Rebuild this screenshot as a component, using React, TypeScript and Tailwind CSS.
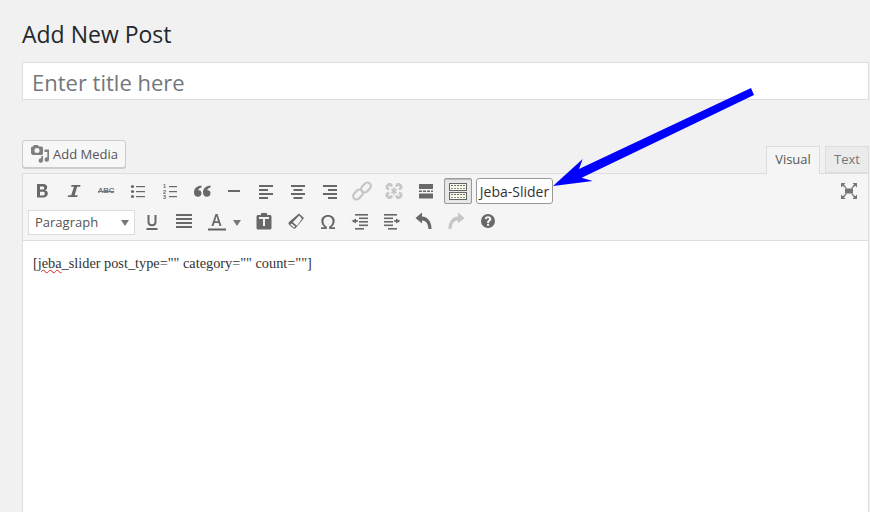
import React from "react";

const C = "#686868";
const D = "#c6c6c6";

function Ico({ children, w = 20, h = 20, className = "" }: { children: React.ReactNode; w?: number; h?: number; className?: string }) {
  return (
    <svg width={w} height={h} viewBox={`0 0 ${w} ${h}`} className={className} fill={C}>
      {children}
    </svg>
  );
}

function Cell({ children, w = "w-[32px]", up = false }: { children: React.ReactNode; w?: string; up?: boolean }) {
  return <div className={`${w} h-full flex items-center justify-center shrink-0 ${up ? "pb-[3px]" : ""}`}>{children}</div>;
}

const Lines = ({ rows, h = 2 }: { rows: [number, number, number][]; h?: number }) => (
  <>
    {rows.map(([x, y, w], i) => (
      <rect key={i} x={x} y={y} width={w} height={h} fill={C} />
    ))}
  </>
);

const Bold = () => (
  <Ico>
    <path fillRule="evenodd" d="M5 3h6.200c2.600 0 4 1.300 4 3.300 0 1.500-.8 2.600-2.200 3 1.700.3 2.800 1.500 2.800 3.300 0 2.400-1.700 3.900-4.600 3.900H5zM8 5.400v3.200h2.600c1 0 1.600-.6 1.600-1.600s-.6-1.600-1.600-1.600zm0 5.400v3.700h3c1.100 0 1.800-.7 1.800-1.900s-.7-1.800-1.800-1.800z" />
  </Ico>
);
const Italic = () => (
  <Ico>
    <path d="M7.500 4h9l-.4 1.800h-3L10.700 14.200h3l-.4 1.800h-9.500l.4-1.800h3L10 5.800H7.100z" />
  </Ico>
);
const Strike = () => (
  <span className="relative font-['Liberation_Sans',sans-serif] font-bold text-[8px] leading-none text-[#777777] tracking-[-0.2px]">
    ABC
    <span className="absolute left-0 right-0 top-[4px] h-[1px] bg-[#777777]" />
  </span>
);
const Ul = () => (
  <Ico>
    <circle cx="4.500" cy="5.500" r="1.600" />
    <circle cx="4.500" cy="10.500" r="1.600" />
    <circle cx="4.500" cy="15.500" r="1.600" />
    <Lines h={1.200} rows={[[8, 5, 9], [8, 10, 9], [8, 15, 9]]} />
  </Ico>
);
const Ol = () => (
  <Ico>
    <text x="3" y="7" fontSize="5.500" fontFamily="Liberation Sans, sans-serif" fontWeight="700" fill={C}>1</text>
    <text x="3" y="12.500" fontSize="5.500" fontFamily="Liberation Sans, sans-serif" fontWeight="700" fill={C}>2</text>
    <text x="3" y="18" fontSize="5.500" fontFamily="Liberation Sans, sans-serif" fontWeight="700" fill={C}>3</text>
    <Lines h={1.200} rows={[[9, 5, 8], [9, 10, 8], [9, 15, 8]]} />
  </Ico>
);
const Quote = () => (
  <Ico>
    <path d="M9.500 4.500v2C7.500 7 6.400 8 6.200 9.300c2-.3 3.300 1.100 3.300 2.900 0 2-1.400 3.500-3.500 3.500-2.400 0-4-1.700-4-4.300 0-3.900 2.800-6.500 7.500-6.900z" />
    <path d="M18.500 4.500v2c-2 .5-3.100 1.500-3.300 2.800 2-.3 3.300 1.100 3.300 2.900 0 2-1.400 3.500-3.500 3.500-2.400 0-4-1.700-4-4.300 0-3.900 2.800-6.500 7.500-6.900z" />
  </Ico>
);
const Hr = () => (
  <Ico>
    <rect x="4" y="9" width="12" height="2" />
  </Ico>
);
const AlignL = () => (
  <Ico>
    <Lines rows={[[3, 4, 14], [3, 8, 9], [3, 12, 14], [3, 16, 9]]} />
  </Ico>
);
const AlignC = () => (
  <Ico>
    <Lines rows={[[3, 4, 14], [5.500, 8, 9], [3, 12, 14], [5.500, 16, 9]]} />
  </Ico>
);
const AlignR = () => (
  <Ico>
    <Lines rows={[[3, 4, 14], [8, 8, 9], [3, 12, 14], [8, 16, 9]]} />
  </Ico>
);
const LinkI = () => (
  <Ico>
    <g fill="none" stroke={D} strokeWidth="2.200">
      <rect x="10.500" y="1" width="7" height="11" rx="3.500" transform="rotate(42 14 6.500)" />
      <rect x="2.500" y="8" width="7" height="11" rx="3.500" transform="rotate(42 6 13.500)" />
    </g>
  </Ico>
);
const Unlink = () => (
  <Ico>
    <g fill="none" stroke={D} strokeWidth="2.800">
      <path d="M8 5.500 6.500 3.500a2.800 2.800 0 0 0-3.500 3.500L5 8.500" />
      <path d="M12 5.500l1.500-2a2.800 2.800 0 0 1 3.500 3.500L15 8.500" />
      <path d="M8 14.500l-1.500 2a2.800 2.800 0 0 1-3.500-3.500L5 11.500" />
      <path d="M12 14.500l1.500 2a2.800 2.800 0 0 0 3.500-3.500L15 11.500" />
      <path d="M7.500 8l5 4M12.500 8l-5 4" strokeWidth="2" />
      <path d="M10 6v8" strokeWidth="1.400" />
    </g>
  </Ico>
);
const More = () => (
  <Ico>
    <rect x="3" y="3" width="14" height="5" />
    <rect x="3" y="9.500" width="3" height="1.500" />
    <rect x="7" y="9.500" width="3" height="1.500" />
    <rect x="11" y="9.500" width="3" height="1.500" />
    <rect x="15" y="9.500" width="2" height="1.500" />
    <rect x="3" y="12.500" width="14" height="5" />
  </Ico>
);
const GridKb = () => (
  <svg width="20" height="20" viewBox="0 0 20 20" shapeRendering="crispEdges">
    <rect x="1.500" y="2.500" width="17" height="7" fill="#f6f6ec" stroke="#666666" />
    <rect x="1.500" y="11.500" width="17" height="7" fill="#f6f6ec" stroke="#666666" />
    <path d="M3 4.500h14M3 13.500h14" stroke="#6e6e5e" strokeWidth="1" strokeDasharray="2 1" />
    <path d="M3 7.500h14M3 16.500h14" stroke="#7f9f7f" strokeWidth="1" strokeDasharray="2 1" />
  </svg>
);
const Under = () => (
  <Ico>
    <path d="M5.500 4h2v6.800c0 1.700.9 2.500 2.500 2.500s2.500-.8 2.500-2.500V4h2v7c0 2.800-1.700 4.300-4.500 4.300S5.500 13.800 5.500 11z" />
    <rect x="4.500" y="17" width="11" height="2" />
  </Ico>
);
const Burger = () => (
  <Ico>
    <Lines rows={[[2, 3, 16], [2, 7, 16], [2, 11, 16], [2, 15, 16]]} />
  </Ico>
);
const TextColor = () => (
  <Ico>
    <path fillRule="evenodd" d="M9.500 3h2l4 12h-1.900l-1-3H8.400l-1 3H5.500zM10.500 5.300 9 10.300h3z" />
    <rect x="2" y="17.500" width="18" height="2" fill="#606060" />
  </Ico>
);
const Paste = () => (
  <Ico>
    <path fillRule="evenodd" d="M7 2h6v2h3c.8 0 1.500.7 1.500 1.500V17c0 .8-.7 1.500-1.500 1.500H4c-.8 0-1.500-.7-1.500-1.500V5.500C2.500 4.700 3.200 4 4 4h3zM5 6v2h4v7h2V8h4V6z" />
  </Ico>
);
const Eraser = () => (
  <Ico>
    <path fillRule="evenodd" d="M13 2.500 18 7 9.800 17c-.8.900-2 .9-2.800.2l-3.800-3.400c-.8-.7-.9-1.900-.2-2.800zM13.200 4.600 6.800 11.300l4.200 3.500 5-7zM5.500 12.500 4.400 13.600 8 16.700l1.200-1.200z" />
  </Ico>
);
const Omega = () => (
  <Ico>
    <path d="M3 18v-1.800h3.800C4.600 14.700 3.300 12.500 3.300 10 3.300 6.400 6 4 10 4s6.700 2.400 6.700 6c0 2.500-1.300 4.700-3.500 6.200H17V18h-5.800v-2.400c2-1 3.300-3 3.300-5.400 0-2.800-1.800-4.400-4.500-4.400S5.500 7.400 5.500 10.200c0 2.400 1.300 4.400 3.300 5.400V18z" />
  </Ico>
);
const Outdent = () => (
  <Ico>
    <Lines h={1.600} rows={[[5, 3, 13], [9, 6.500, 9], [9, 10, 9], [9, 13.500, 9], [5, 17, 9]]} />
    <path d="M6 7.500v5L1.500 10z" />
    <rect x="5" y="9.200" width="3" height="1.600" />
  </Ico>
);
const Indent = () => (
  <Ico>
    <Lines h={1.600} rows={[[2, 3, 13], [2, 6.500, 9], [2, 10, 9], [2, 13.500, 9], [6, 17, 9]]} />
    <path d="M14 7.500v5l4.500-2.500z" />
    <rect x="12" y="9.200" width="3" height="1.600" />
  </Ico>
);
const Undo = () => (
  <Ico>
    <path d="M8 1.500 1.500 7 8 12.500V9.500c3.800.1 6 2.700 6.500 8.500h3C17.500 10.500 14 6 8 5.500z" />
  </Ico>
);
const Redo = () => (
  <Ico>
    <path fill={D} d="M12 1.500 18.500 7 12 12.500V9.500c-3.800.1-6 2.700-6.500 8.500h-3C2.500 10.500 6 6 12 5.500z" />
  </Ico>
);
const Help = () => (
  <Ico>
    <path fillRule="evenodd" d="M10 3a7 7 0 1 1 0 14 7 7 0 0 1 0-14zM10 5.200c-2 0-3.100 1-3.300 2.800l2 .3c.1-.8.500-1.200 1.200-1.200.7 0 1.100.4 1.100 1 0 .5-.3.8-.9 1.200-.8.600-1 1.200-1 2.100v.5h2v-.3c0-.5.200-.8.800-1.200 1-.7 1.400-1.300 1.400-2.400 0-1.800-1.100-2.800-3.300-2.800zM9 12.800v2h2.100v-2z" />
  </Ico>
);
const Full = () => (
  <svg width="20" height="20" viewBox="0 0 20 20" fill="#757575">
    <rect x="6" y="7.500" width="8" height="5" />
    <path d="M2 2h4.500L5 3.500 8 7.500H6.800L3.800 4.800 2 6.500zM18 2h-4.500L15 3.500 12 7.500h1.200l3-2.700L18 6.500zM2 18h4.500L5 16.500l3-4H6.800l-3 2.700L2 13.500zM18 18h-4.500l1.500-1.500-3-4h1.200l3 2.700 1.800-1.700z" />
  </svg>
);
const MediaI = () => (
  <svg width="20" height="20" viewBox="0 0 20 20" fill="#808080">
    <path fillRule="evenodd" d="M4 1h4l1 1.500h2.500c.8 0 1.500.7 1.500 1.500v5.500c0 .8-.7 1.500-1.500 1.500h-9C1.700 10.500 1 9.800 1 9V4c0-.8.7-1.500 1.500-1.500H3zM7 4a2.500 2.500 0 1 0 0 5 2.500 2.500 0 0 0 0-5z" />
    <path d="M14.500 5.500H19v10a2.200 2.200 0 1 1-1.700-2.100V8h-2.800zM13 12v4.500a2.200 2.200 0 1 1-1.700-2.100V12z" />
  </svg>
);

export default function App() {
  return (
    <div className="relative w-[870px] h-[512px] overflow-hidden bg-[#f1f1f1] font-['Open_Sans',sans-serif] pl-[22px] pr-[1px] flex flex-col">
      <h1 className="mt-[19px] h-[31px] leading-[31px] text-[23px] text-[#23282d] font-normal">Add New Post</h1>
      <input
        readOnly
        placeholder="Enter title here"
        className="mt-[12px] h-[38px] w-full shrink-0 bg-white border border-[#dddddd] pl-[9px] pt-[2px] text-[22px] outline-none placeholder:text-[#72777c]"
      />
      <div className="mt-[40px] h-[34px] shrink-0 flex items-start justify-between">
        <button className="h-[28px] w-[104px] flex items-center gap-[3px] pl-[7px] rounded-[3px] border border-[#cccccc] bg-[#f7f7f7] shadow-[0_1px_0_#cccccc] text-[13px] text-[#555555]">
          <MediaI />
          <span className="pt-[2px]">Add Media</span>
        </button>
        <div className="mt-[6px] flex gap-[5px] h-[28px]">
          <div className="w-[54px] h-[28px] bg-[#f5f5f5] border border-[#dddddd] border-b-0 flex items-center justify-center pb-[2px] text-[13px] text-[#555555] z-10">Visual</div>
          <div className="w-[44px] h-[27px] bg-[#ebebeb] border border-[#dddddd] flex items-center justify-center text-[13px] text-[#777777]">Text</div>
        </div>
      </div>
      <div className="-mt-[1px] flex-1 flex flex-col border border-[#dddddd] border-b-0 bg-white">
        <div className="bg-[#f5f5f5] border-b border-[#dddddd] pl-[3px] pt-[1px] pb-[2px] h-[67px] shrink-0">
          <div className="h-[32px] flex items-center">
            <Cell><Bold /></Cell>
            <Cell><Italic /></Cell>
            <Cell><Strike /></Cell>
            <Cell><Ul /></Cell>
            <Cell><Ol /></Cell>
            <Cell><Quote /></Cell>
            <Cell><Hr /></Cell>
            <Cell><AlignL /></Cell>
            <Cell><AlignC /></Cell>
            <Cell><AlignR /></Cell>
            <Cell><LinkI /></Cell>
            <Cell><Unlink /></Cell>
            <Cell><More /></Cell>
            <Cell>
              <div className="w-[28px] h-[26px] flex items-center justify-center border border-[#999999] rounded-[2px] bg-[#e8e8e8] shadow-[inset_0_1px_1px_#bbbbbb]">
                <GridKb />
              </div>
            </Cell>
            <button className="ml-[2px] w-[77px] h-[26px] bg-white border border-[#999999] rounded-[3px] text-[14px] text-[#333333] flex items-center justify-center">Jeba-Slider</button>
            <div className="ml-auto mr-[9px] flex items-center"><Full /></div>
          </div>
          <div className="h-[31px] flex items-center">
            <div className="ml-[2px] mr-[1px] w-[107px] h-[25px] bg-white border border-[#dddddd] flex items-center justify-between pl-[6px] pr-[5px] text-[13px] text-[#555555] shrink-0">
              Paragraph
              <span className="w-0 h-0 border-x-[4px] border-x-transparent border-t-[6px] border-t-[#777777]" />
            </div>
            <Cell up><Under /></Cell>
            <Cell up><Burger /></Cell>
            <Cell up w="w-[48px]">
              <div className="w-[32px] -ml-[16px] flex justify-center relative">
                <TextColor />
                <span className="absolute left-[33px] top-[9px] w-0 h-0 border-x-[4px] border-x-transparent border-t-[6px] border-t-[#777777]" />
              </div>
            </Cell>
            <Cell up><Paste /></Cell>
            <Cell up><Eraser /></Cell>
            <Cell up><Omega /></Cell>
            <Cell up><Outdent /></Cell>
            <Cell up><Indent /></Cell>
            <Cell up><Undo /></Cell>
            <Cell up><Redo /></Cell>
            <Cell up><Help /></Cell>
          </div>
        </div>
        <div className="pl-[10px] pt-[13px] text-[14.300px] leading-[19px] text-[#333333] font-['Liberation_Serif',serif]">
          [<span className="underline decoration-wavy decoration-[#e02020] decoration-1">jeba</span>_slider post_type="" category="" count=""]
        </div>
      </div>
      <svg className="absolute left-0 top-0 pointer-events-none" width="870" height="512" viewBox="0 0 870 512">
        <path d="M751 88 L754 95 L581.700 177.700 L592.700 181 L553 186 L582.700 159 L579 169 Z" fill="#0000ff" />
      </svg>
    </div>
  );
}
